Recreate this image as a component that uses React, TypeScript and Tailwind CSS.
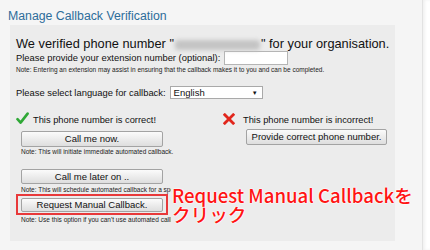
const Btn = ({ label, className = "" }: { label: string; className?: string }) => (
  <button
    type="button"
    className={
      "flex items-center justify-center rounded-[2px] border border-[#a3a3a3] bg-gradient-to-b from-[#fbfbfb] to-[#dedede] text-[9.5px] leading-none text-[#111] " +
      className
    }
  >
    {label}
  </button>
);

const Note = ({ children, className = "" }: { children: React.ReactNode; className?: string }) => (
  <p className={"text-[6.5px] leading-[8px] text-[#222] whitespace-nowrap " + className}>{children}</p>
);

const CheckIcon = () => (
  <svg width="13" height="13" viewBox="0 0 13 13">
    <path d="M1.5 7.2 L4.6 10.6 L11.6 1.6" fill="none" stroke="#2fa836" strokeWidth="2.6" strokeLinecap="round" strokeLinejoin="round" />
  </svg>
);

const CrossIcon = () => (
  <svg width="12" height="12" viewBox="0 0 12 12">
    <path d="M1.8 1.8 L10.2 10.2 M10.2 1.8 L1.8 10.2" fill="none" stroke="#e1261c" strokeWidth="2.8" strokeLinecap="square" />
  </svg>
);

const App = () => {
  return (
    <div className="relative flex w-[430px] h-[250px] overflow-hidden bg-[#f5f5f5] font-['Liberation_Sans',Arial,sans-serif] text-[#111]">
      <div className="w-[422px] pl-[8px] pt-[9px]">
        <h1 className="text-[12.3px] leading-[14px] text-[#2d6d9a]">Manage Callback Verification</h1>
        <div className="ml-[2px] mt-[2px] w-[385px] h-[216px] bg-[#ececec] pl-[6px] pt-[11px]">
          <p className="text-[12.8px] leading-[15px] whitespace-nowrap">
            We verified phone number "
            <span className="inline-block align-middle mx-[1px] w-[85px] h-[10px] rounded-[3px] bg-[#c4c4c4] blur-[2px]" />
            " for your organisation.
          </p>
          <div className="flex h-[14px] items-center gap-[4px]">
            <span className="text-[9.4px] leading-none">Please provide your extension number (optional):</span>
            <span className="h-[14px] w-[64px] border border-[#b5b5b5] bg-white" />
          </div>
          <Note className="mt-[1px]">
            Note: Entering an extension may assist in ensuring that the callback makes it to you and can be completed.
          </Note>
          <div className="mt-[12px] flex h-[13px] items-center gap-[4px]">
            <span className="text-[9.4px] leading-none">Please select language for callback:</span>
            <span className="flex h-[13px] w-[93px] items-center justify-between border border-[#a9a9a9] bg-white pl-[3px] pr-[4px]">
              <span className="text-[9.5px] leading-none">English</span>
              <span className="text-[6px] leading-none">▼</span>
            </span>
          </div>
          <div className="mt-[13px] flex">
            <div className="w-[207px]">
              <div className="flex h-[13px] items-center gap-[4px]">
                <CheckIcon />
                <span className="text-[9.3px] leading-none pt-[4px]">This phone number is correct!</span>
              </div>
              <Btn label="Call me now." className="ml-[5px] mt-[6px] h-[16px] w-[142px]" />
              <Note className="ml-[5px] mt-[1px]">Note: This will initiate immediate automated callback.</Note>
              <Btn label="Call me later on .." className="ml-[5px] mt-[13px] h-[15px] w-[142px]" />
              {/* the tail of these notes sits under the red annotation */}
              <Note className="ml-[5px] mt-[2px] w-[150px] overflow-hidden">
                Note: This will schedule automated callback for a specified time.
              </Note>
              <div className="flex h-[21px] w-[152px] items-center justify-center border-2 border-[#e8393a]">
                <Btn label="Request Manual Callback." className="h-[14px] w-[142px]" />
              </div>
              <Note className="ml-[5px] mt-[1px] w-[150px] overflow-hidden">
                Note: Use this option if you can't use automated callback.
              </Note>
            </div>
            <div className="pt-[1px]">
              <div className="flex h-[12px] items-center gap-[8px]">
                <CrossIcon />
                <span className="text-[9.3px] leading-none pt-[3px]">This phone number is incorrect!</span>
              </div>
              <Btn label="Provide correct phone number." className="ml-[23px] mt-[4px] h-[16px] w-[141px]" />
            </div>
          </div>
        </div>
      </div>
      <div className="flex-1 border-l border-[#e2e2e2] bg-white shadow-[inset_2px_0_3px_rgba(0,0,0,0.06)]" />
      <div className="absolute left-[172px] top-[185px] text-[18.6px] leading-[19px] font-medium text-[#ff1414] font-['Noto_Sans_CJK_JP','Noto_Sans',sans-serif] [text-shadow:0_0_2px_#fff,0_0_2px_#fff,0_0_1px_#fff,0_0_1px_#fff]">
        <div>Request Manual Callbackを</div>
        <div>クリック</div>
      </div>
    </div>
  );
};

export default App;
